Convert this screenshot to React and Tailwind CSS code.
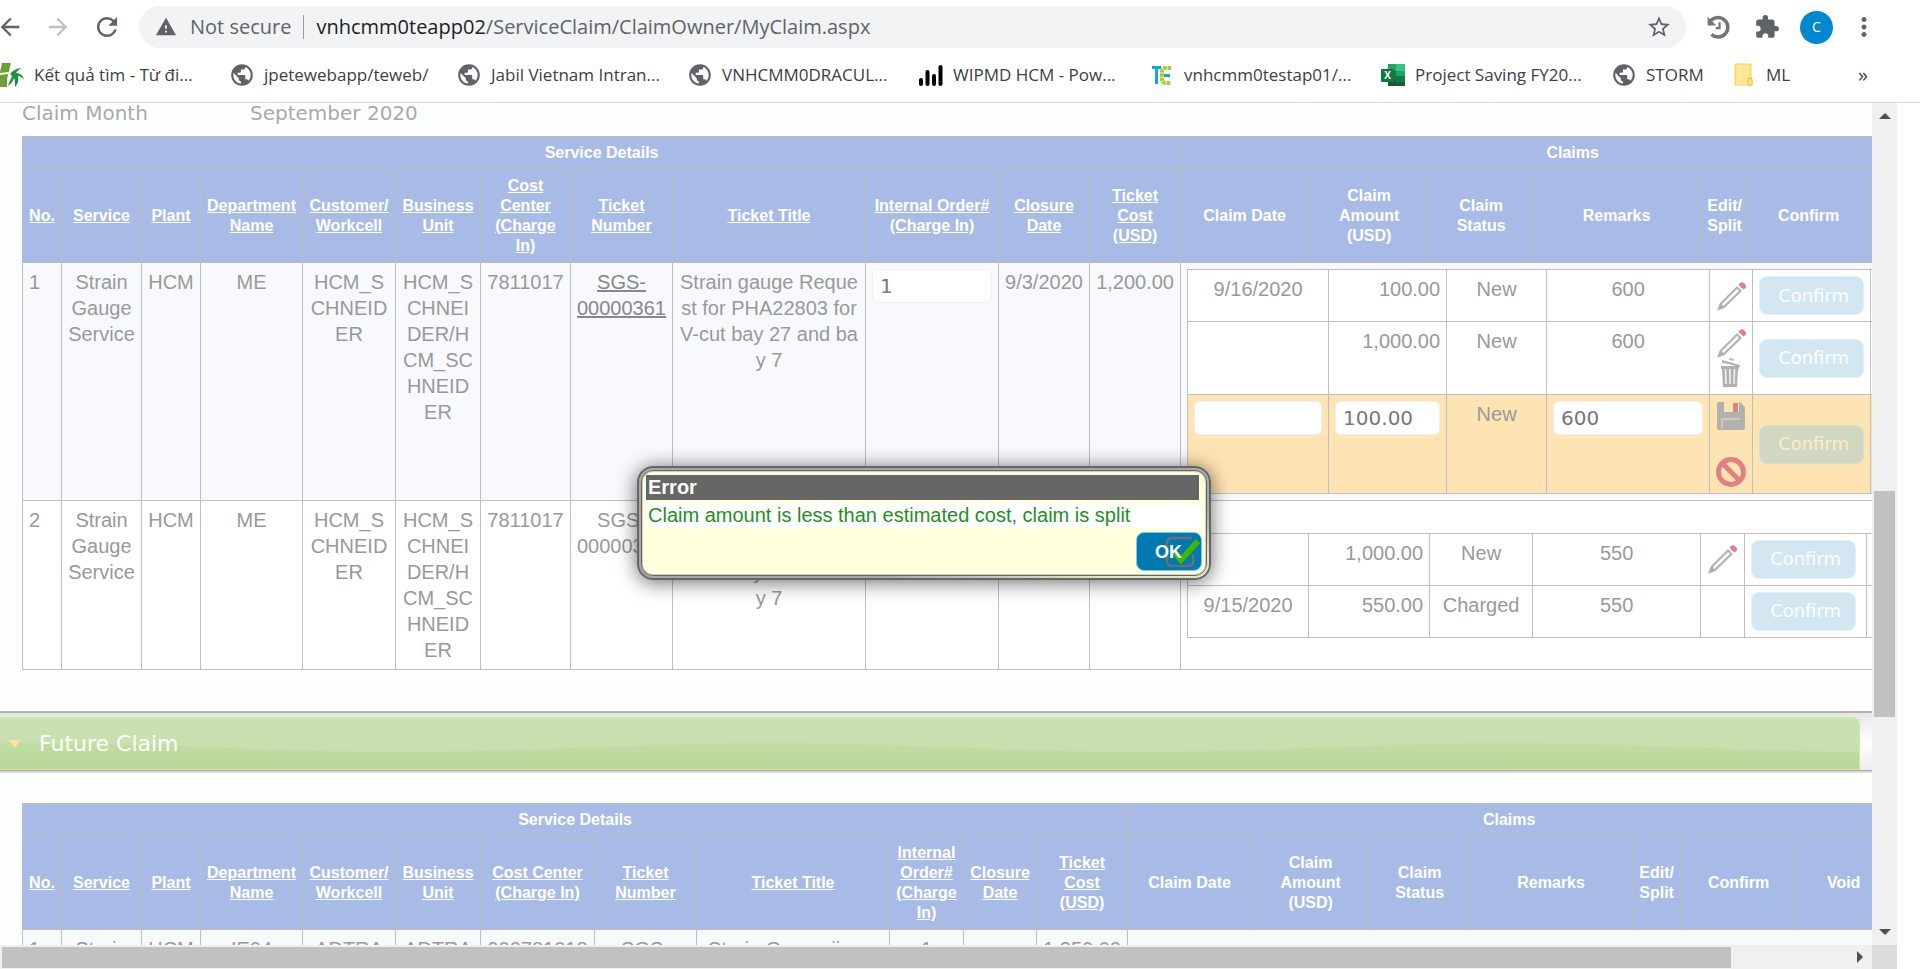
import React from "react";
import {
  MdArrowBack,
  MdArrowForward,
  MdRefresh,
  MdWarning,
  MdStarBorder,
  MdExtension,
  MdMoreVert,
  MdPublic,
} from "react-icons/md";

/* ---------- bookmark icons ---------- */

const Globe = () => <MdPublic className="size-[26px] shrink-0 text-[#5f6368]" />;

const Bamboo = () => (
  <svg viewBox="0 0 24 24" className="size-6">
    <path d="M2 0h9L9 8 7 16v8H0V9z" fill="#6f9f33" />
    <path d="M0 10l9-1-1 2-8 1z" fill="#fff" />
    <path d="M10 11c3-4 7-6 12-6-3 1-5 3-6 5 4 0 7 2 8 7-2-3-4-4-6-4 1 4 0 8-3 11 0-4 0-7-1-9-1 3-3 6-6 8 1-4 3-7 4-10z" fill="#1f8f46" />
  </svg>
);

const PowerBars = () => (
  <svg viewBox="0 0 24 24" className="size-6" fill="#000">
    <rect x="0" y="15" width="4" height="8" rx="2" />
    <rect x="6.500" y="7" width="4" height="16" rx="2" />
    <rect x="13" y="11" width="4" height="12" rx="2" />
    <rect x="19.500" y="2" width="4" height="21" rx="2" />
  </svg>
);

const TeLogo = () => (
  <svg viewBox="0 0 22 24" className="h-6 w-[22px]">
    <path d="M1 3h9v3H7v15H4V6H1z" fill="#16a5dc" />
    <path d="M20 5h-5q-4 0-4 4v7q0 4 4 4h5" fill="none" stroke="#a5cd39" strokeWidth="4" strokeDasharray="3.500 0.700" />
    <path d="M13 12.500h6" stroke="#16a5dc" strokeWidth="3" />
  </svg>
);

const Excel = () => (
  <svg viewBox="0 0 24 24" className="size-6">
    <path d="M7 1h8v7H7z" fill="#21a366" />
    <path d="M15 1h9v7h-9z" fill="#33c481" />
    <path d="M7 8h8v8H7z" fill="#107c41" />
    <path d="M15 8h9v5h-9z" fill="#21a366" />
    <path d="M15 13h9v6h-9z" fill="#107c41" />
    <path d="M7 16h8v3h9v4H7z" fill="#185c37" />
    <rect x="0" y="6" width="13" height="13" rx="1" fill="#0f7a3e" />
    <text x="6.500" y="16" textAnchor="middle" fontSize="10" fontWeight="700" fill="#fff" fontFamily="Open Sans, sans-serif">X</text>
  </svg>
);

const Folder = () => (
  <svg viewBox="0 0 20 24" className="h-6 w-5">
    <path d="M1 1h16v15h1v6H1z" fill="#ffe794" stroke="#f8d04c" />
    <path d="M14 22v-5q0-2 2-2t2 2v5z" fill="#ffe794" stroke="#e8bd36" />
  </svg>
);

const HistoryIcon = () => (
  <svg viewBox="0 0 24 24" className="size-[26px]" fill="none" stroke="#757575" aria-hidden="true">
    <path d="M3 8.500A9 9 0 1 1 5 18.800" strokeWidth="3.200" />
    <path d="M2 2v8h9" strokeWidth="0" />
    <path d="M1.500 2.500v8h8z" fill="#757575" strokeWidth="0" />
    <path d="M12.500 7.500v5.500H9" strokeWidth="2" />
  </svg>
);

const BOOKMARKS = [
  { icon: <Bamboo />, label: "Kết quả tìm - Từ đi...", width: "w-[230px]" },
  { icon: <Globe />, label: "jpetewebapp/teweb/", width: "w-[227px]" },
  { icon: <Globe />, label: "Jabil Vietnam Intran...", width: "w-[231px]" },
  { icon: <Globe />, label: "VNHCMM0DRACUL...", width: "w-[231px]" },
  { icon: <PowerBars />, label: "WIPMD HCM - Pow...", width: "w-[231px]" },
  { icon: <TeLogo />, label: "vnhcmm0testap01/...", width: "w-[231px]" },
  { icon: <Excel />, label: "Project Saving FY20...", width: "w-[231px]" },
  { icon: <Globe />, label: "STORM", width: "w-[120px]" },
  { icon: <Folder />, label: "ML", width: "w-[80px]" },
];

/* ---------- row action icons ---------- */

const Pencil = () => (
  <svg viewBox="0 0 30 30" className="size-[30px]">
    <path d="M21 6.500l3.500 3.500L8 26l-5 2 2-5.500z" fill="#fafafa" stroke="#b1b1b1" strokeWidth="2" strokeLinejoin="round" />
    <path d="M4 22l5 4-8 3.500z" fill="#b1b1b1" />
    <path d="M23.500 2.500q2.500-2.500 5 0t1 4.500l-2 1.500-5-4.500z" fill="#e08080" />
  </svg>
);

const Trash = () => (
  <svg viewBox="0 0 30 30" className="size-[30px]">
    <path d="M13 1.500q3-1 5 1" fill="none" stroke="#eda9a9" strokeWidth="2" />
    <path d="M6 2l18 5v2L6 4.500z" fill="#b1b1b1" />
    <path d="M5 8h18v3h-1l-1 18H7L6 11H5z" fill="#b1b1b1" />
    <path d="M9.500 11l.5 15M14 11v15M18.500 11l-.5 15" stroke="#f1f1f1" strokeWidth="1.600" />
  </svg>
);

const Save = () => (
  <svg viewBox="0 0 30 30" className="size-[30px]">
    <path d="M3 1h5v10h15V1h1l5 5v21q0 2-2 2H3q-2 0-2-2V3q0-2 2-2z" fill="#b1b1b1" />
    <rect x="17" y="2" width="5" height="9" fill="#e08080" />
    <path d="M6 28V18h18" fill="none" stroke="#d6c8ac" strokeWidth="2" />
  </svg>
);

const Forbid = () => (
  <svg viewBox="0 0 30 30" className="size-[30px]" fill="none" stroke="#e08080" strokeWidth="5">
    <circle cx="15" cy="15" r="12.500" />
    <path d="M6 6l18 18" />
  </svg>
);

const IconButton = ({ label, children }) => (
  <button type="button" aria-label={label} className="block size-[30px]">
    {children}
  </button>
);

const ConfirmButton = ({ edit }) => (
  <button
    type="button"
    className={
      "block h-[39px] w-[105px] rounded-lg border pl-1 font-['DejaVu_Sans',sans-serif] text-lg leading-6 " +
      (edit ? "border-[#d5e2c8] bg-[#d1d7c0] text-[#fdedcb]" : "border-[#dff2fa] bg-[#d3e7f2] text-[#fcfeff]")
    }
  >
    Confirm
  </button>
);

const TextField = ({ label, value, className }) => (
  <input
    aria-label={label}
    defaultValue={value}
    className={
      "block h-[34px] rounded-md border border-[#f0f0f0] bg-white px-[7px] font-['DejaVu_Sans',sans-serif] text-xl text-[#777] " +
      className
    }
  />
);

/* ---------- claim tables ---------- */

const FIRST_COLS = [39, 80, 59, 102, 93, 85, 90, 102, 193, 133, 91, 91, 128, 121, 103, 168, 48, 120, 96];
const SECOND_COLS = [39, 80, 59, 102, 93, 85, 114, 102, 193, 74, 73, 91, 124, 118, 100, 163, 48, 116, 94];

const SERVICE_HEADS = [
  "No.",
  "Service",
  "Plant",
  "Department Name",
  "Customer/ Workcell",
  "Business Unit",
  "Cost Center (Charge In)",
  "Ticket Number",
  "Ticket Title",
  "Internal Order# (Charge In)",
  "Closure Date",
  "Ticket Cost (USD)",
];
const CLAIM_HEADS = ["Claim Date", "Claim Amount (USD)", "Claim Status", "Remarks", "Edit/ Split", "Confirm"];

const sum = (list) => list.reduce((a, b) => a + b, 0);

const Cols = ({ widths }) => (
  <colgroup>
    {widths.map((w, i) => (
      <col key={i} style={{ width: w }} />
    ))}
  </colgroup>
);

const Head = ({ last }) => (
  <thead className="bg-[#a8bbe7] text-base leading-5 font-bold text-white">
    <tr>
      <th colSpan={12} className="border border-[#bdbdbd] p-1.5">Service Details</th>
      <th colSpan={7} className="border border-[#bdbdbd] p-1.5">Claims</th>
    </tr>
    <tr className="h-[93px]">
      {SERVICE_HEADS.map((h) => (
        <th key={h} className="border border-[#bdbdbd] px-1 py-1.5">
          <a href="#sort" className="underline">{h}</a>
        </th>
      ))}
      {CLAIM_HEADS.map((h) => (
        <th key={h} className="border border-[#bdbdbd] px-1.5 py-1.5">
          <span className={h.startsWith("Claim ") && h !== "Claim Date" ? "inline-block max-w-[70px]" : ""}>{h}</span>
        </th>
      ))}
      <th className="border border-[#bdbdbd] p-1.5">{last}</th>
    </tr>
  </thead>
);

const BOX = "border border-[#bfbfbf] p-1.5 ";
const CELL = BOX + "align-top ";
const MIDDLE = BOX + "align-middle";

const ServiceCells = ({ no, ticket, order }) => (
  <>
    <td className={CELL + "text-left"}>{no}</td>
    <td className={CELL}>Strain Gauge Service</td>
    <td className={CELL + "whitespace-nowrap"}>HCM</td>
    <td className={CELL}>ME</td>
    <td className={CELL + "break-all"}>HCM_SCHNEIDER</td>
    <td className={CELL + "break-all"}>HCM_SCHNEIDER/HCM_SCHNEIDER</td>
    <td className={CELL + "whitespace-nowrap"}>7811017</td>
    <td className={CELL + "px-0"}>{ticket}</td>
    <td className={CELL + "break-all"}>Strain gauge Request for PHA22803 for V-cut bay 27 and bay 7</td>
    <td className={CELL}>{order}</td>
    <td className={CELL + "px-0 whitespace-nowrap"}>9/3/2020</td>
    <td className={CELL + "px-0 whitespace-nowrap"}>1,200.00</td>
  </>
);

const ClaimTable = ({ widths, children }) => (
  <table className="table-fixed border-collapse bg-white" style={{ width: sum(widths) }}>
    <Cols widths={widths} />
    <tbody>{children}</tbody>
  </table>
);

const Ticket = () => (
  <>
    SGS-
    <br />
    00000361
  </>
);

const CurrentClaims = () => (
  <table className="table-fixed border-collapse text-center text-xl leading-[26px] text-[#999]" style={{ width: sum(FIRST_COLS) }}>
    <Cols widths={FIRST_COLS} />
    <Head />
    <tbody>
      <tr className="bg-[#f7f9fd]">
        <ServiceCells
          no="1"
          ticket={<a href="#ticket" className="text-[#888] underline decoration-2"><Ticket /></a>}
          order={<TextField label="Internal order" value="1" className="w-full" />}
        />
        <td colSpan={7} className={CELL}>
          <ClaimTable widths={[141, 118, 100, 163, 43, 118, 90]}>
            <tr>
              <td className={CELL}>9/16/2020</td>
              <td className={CELL + "text-right"}>100.00</td>
              <td className={CELL}>New</td>
              <td className={CELL}>600</td>
              <td className={MIDDLE}><IconButton label="Edit"><Pencil /></IconButton></td>
              <td className={MIDDLE}><ConfirmButton /></td>
              <td className={CELL} />
            </tr>
            <tr>
              <td className={CELL} />
              <td className={CELL + "text-right"}>1,000.00</td>
              <td className={CELL}>New</td>
              <td className={CELL}>600</td>
              <td className={CELL}>
                <IconButton label="Edit"><Pencil /></IconButton>
                <IconButton label="Delete"><Trash /></IconButton>
              </td>
              <td className={MIDDLE}><ConfirmButton /></td>
              <td className={CELL} />
            </tr>
            <tr className="bg-[#ffe4b3]">
              <td className={CELL}><TextField label="Claim date" value="" className="w-full" /></td>
              <td className={CELL}><TextField label="Claim amount" value="100.00" className="w-full" /></td>
              <td className={CELL}>New</td>
              <td className={CELL}><TextField label="Remarks" value="600" className="w-full" /></td>
              <td className={CELL}>
                <div className="flex flex-col gap-[26px]">
                  <IconButton label="Save"><Save /></IconButton>
                  <IconButton label="Cancel"><Forbid /></IconButton>
                </div>
              </td>
              <td className={MIDDLE}><ConfirmButton edit /></td>
              <td className={CELL} />
            </tr>
          </ClaimTable>
        </td>
      </tr>
      <tr className="bg-white">
        <ServiceCells no="2" ticket={<Ticket />} />
        <td colSpan={7} className={MIDDLE}>
          <ClaimTable widths={[121, 121, 103, 168, 44, 122, 94]}>
            <tr>
              <td className={CELL} />
              <td className={CELL + "text-right"}>1,000.00</td>
              <td className={CELL + "px-0"}>New</td>
              <td className={CELL}>550</td>
              <td className={MIDDLE}><IconButton label="Edit"><Pencil /></IconButton></td>
              <td className={MIDDLE}><ConfirmButton /></td>
              <td className={CELL} />
            </tr>
            <tr>
              <td className={CELL}>9/15/2020</td>
              <td className={CELL + "text-right"}>550.00</td>
              <td className={CELL + "px-0"}>Charged</td>
              <td className={CELL}>550</td>
              <td className={CELL} />
              <td className={MIDDLE}><ConfirmButton /></td>
              <td className={CELL} />
            </tr>
          </ClaimTable>
        </td>
      </tr>
    </tbody>
  </table>
);

const FUTURE_ROW = ["1", "Strain", "HCM", "IE04", "ADTRA", "ADTRA", "900781018", "SGS-", "Strain Gauge jig co", "1", "", "1,350.00"];

const FutureClaims = () => (
  <table className="table-fixed border-collapse text-center text-xl leading-[26px] text-[#999]" style={{ width: sum(SECOND_COLS) }}>
    <Cols widths={SECOND_COLS} />
    <Head last="Void" />
    <tbody>
      <tr className="bg-[#f7f9fd]">
        {FUTURE_ROW.map((t, i) => (
          <td key={i} className={CELL + "whitespace-nowrap " + (i === 0 ? "text-left" : "px-0")}>{t}</td>
        ))}
        <td colSpan={7} className={CELL} />
      </tr>
    </tbody>
  </table>
);

/* ---------- page parts ---------- */

const BrowserBar = () => (
  <header className="shrink-0 border-b border-[#d5d7da] bg-white font-['Open_Sans','Noto_Sans',sans-serif] text-[#5f6368]">
    <div className="flex h-[54px] items-center pr-[29px]">
      <button type="button" aria-label="Back" className="-ml-1"><MdArrowBack className="size-7" /></button>
      <button type="button" aria-label="Forward" className="ml-5 text-[#bdc1c6]"><MdArrowForward className="size-7" /></button>
      <button type="button" aria-label="Reload" className="ml-5"><MdRefresh className="size-[30px]" /></button>
      <div className="ml-[17px] flex h-[42px] flex-1 items-center rounded-full bg-[#f1f3f4] pr-3.5 pl-4">
        <MdWarning className="size-[22px]" />
        <span className="ml-[13px] text-xl whitespace-nowrap">Not secure</span>
        <span className="mx-3 h-6 w-px bg-[#9aa0a6]" />
        <span className="flex-1 text-xl whitespace-nowrap">
          <span className="text-[#202124]">vnhcmm0teapp02</span>/ServiceClaim/ClaimOwner/MyClaim.aspx
        </span>
        <button type="button" aria-label="Bookmark this page"><MdStarBorder className="size-[26px]" /></button>
      </div>
      <button type="button" aria-label="History" className="ml-5"><HistoryIcon /></button>
      <button type="button" aria-label="Extensions" className="ml-[22px]"><MdExtension className="size-[26px]" /></button>
      <button type="button" className="ml-5 size-[33px] rounded-full bg-[#0288d1] text-sm text-white">C</button>
      <button type="button" aria-label="Menu" className="mr-3 ml-4"><MdMoreVert className="size-[30px]" /></button>
    </div>
    <nav className="flex h-12 items-center overflow-hidden pr-[52px] pb-1.5 text-[17px] text-[#3c4043]">
      {BOOKMARKS.map((b) => (
        <a key={b.label} href="#bookmark" className={"flex shrink-0 items-center gap-2.5 whitespace-nowrap " + b.width}>
          <span className="flex w-6 shrink-0 justify-center">{b.icon}</span>
          {b.label}
        </a>
      ))}
      <button type="button" aria-label="More bookmarks" className="ml-auto text-xl">»</button>
    </nav>
  </header>
);

const FutureHeading = () => (
  <div className="border-b-2 border-b-[#dcdcdc] bg-gradient-to-b from-[#e6e6e6] via-white to-[#ececec] pt-1">
    <div className="border-b border-[#a9a9a9] pr-3">
      <h2 className="relative flex h-[53px] items-center overflow-hidden rounded-tr-lg border border-l-0 border-[#d0eaa0] bg-gradient-to-b from-[#cae2b2] to-[#c6deac] font-['DejaVu_Sans',sans-serif] text-[22px] text-white">
        <svg className="absolute inset-0 h-full w-full" aria-hidden="true">
          <defs>
            <linearGradient id="hill" x1="0" y1="0" x2="0" y2="1">
              <stop offset="0" stopColor="#c1dda4" />
              <stop offset="0.600" stopColor="#bbd79c" />
              <stop offset="1" stopColor="#b3cf96" />
            </linearGradient>
            <pattern id="hills" x="32" y="0" width="738" height="60" patternUnits="userSpaceOnUse">
              <path d="M0 25C130 25 240 34 369 34S608 25 738 25V60H0z" fill="url(#hill)" />
            </pattern>
          </defs>
          <rect width="100%" height="100%" fill="url(#hills)" />
        </svg>
        <svg viewBox="0 0 12 8" className="relative ml-[9px] h-2 w-3" aria-hidden="true">
          <path d="M0 0h12L6 8z" fill="#fbe5a6" />
        </svg>
        <span className="relative ml-[18px]">Future Claim</span>
      </h2>
    </div>
  </div>
);

const ErrorDialog = () => (
  <div className="absolute inset-0 flex items-center justify-center pr-6 pb-0.5">
    <div
      role="dialog"
      aria-label="Error"
      className="w-[574px] rounded-2xl border-2 border-[#666] bg-gradient-to-br from-[#a6a6a6] from-70% to-[#e4e4cc] to-90% p-0.5 shadow-[0_2px_20px_rgba(0,0,0,0.6)]"
    >
      <div className="rounded-xl border border-[#666] bg-[#ffffdd] p-1 shadow-[inset_0_0_0_1px_#d0d0c0]">
        <h2 className="mr-[3px] bg-[#666] pl-0.5 text-xl leading-[25px] font-bold text-white">Error</h2>
        <p className="mt-[3px] bg-white pl-0.5 text-xl leading-[25px] text-[#1f8f24]">
          Claim amount is less than estimated cost, claim is split
        </p>
        <div className="mt-1 flex justify-end">
          <button
            type="button"
            className="relative h-[39px] w-[66px] rounded-lg border border-[#6fd0f2] bg-[#0078b0] pl-[18px] text-left text-lg font-bold text-white"
          >
            <svg viewBox="0 0 38 32" className="absolute top-0.5 right-0 h-8 w-[38px]" aria-hidden="true">
              <path d="M29 4H9Q4 4 4 9v18q0 5 5 5h16q5 0 5-5v-7" transform="translate(0 -1)" fill="none" stroke="#6f6f6f" strokeWidth="2.500" />
              <path d="M11 17l7 8L35 6" fill="none" stroke="#3db800" strokeWidth="6" />
            </svg>
            <span className="relative">OK</span>
          </button>
        </div>
      </div>
    </div>
  </div>
);

const Arrow = ({ d }) => (
  <svg viewBox="0 0 12 12" className="size-3" aria-hidden="true">
    <path d={d} fill="#505050" />
  </svg>
);

export default function App() {
  return (
    <div className="flex h-screen flex-col overflow-hidden bg-white font-['Liberation_Sans',Arial,sans-serif]">
      <div className="flex min-h-0 flex-1 flex-col">
        <BrowserBar />
        <div className="mr-[23px] flex min-h-0 flex-1">
          <main className="relative min-w-0 flex-1 overflow-hidden bg-[#fdfffe]">
            <section className="border-b-2 border-[#b2b2b2] pb-[41px] pl-[22px]">
              <dl className="flex pb-[13px] font-['DejaVu_Sans',sans-serif] text-xl leading-5 text-[#a9a9a9]">
                <dt className="w-[228px]">Claim Month</dt>
                <dd>September 2020</dd>
              </dl>
              <CurrentClaims />
            </section>
            <FutureHeading />
            <section className="pt-[30px] pl-[22px]">
              <FutureClaims />
            </section>
            <ErrorDialog />
          </main>
          <div className="flex w-[25px] shrink-0 flex-col items-center bg-[#f0f0f0] py-[7px]" aria-hidden="true">
            <Arrow d="M6 3l6 6H0z" />
            <div className="flex w-full flex-1 flex-col items-center">
              <div className="grow-[369]" />
              <div className="w-[21px] grow-[226] bg-[#c1c1c1]" />
              <div className="grow-[209]" />
            </div>
            <Arrow d="M0 3h12L6 9z" />
          </div>
        </div>
        <div className="mr-[23px] flex h-6 shrink-0 bg-[#f0f0f0]" aria-hidden="true">
          <div className="flex flex-1 items-center pr-1.5 pl-0.5">
            <div className="h-[21px] grow-[1729] bg-[#c1c1c1]" />
            <div className="grow-[123]" />
            <Arrow d="M3 0l6 6-6 6z" />
          </div>
          <div className="w-[25px] bg-[#dcdcdc]" />
        </div>
      </div>
    </div>
  );
}
